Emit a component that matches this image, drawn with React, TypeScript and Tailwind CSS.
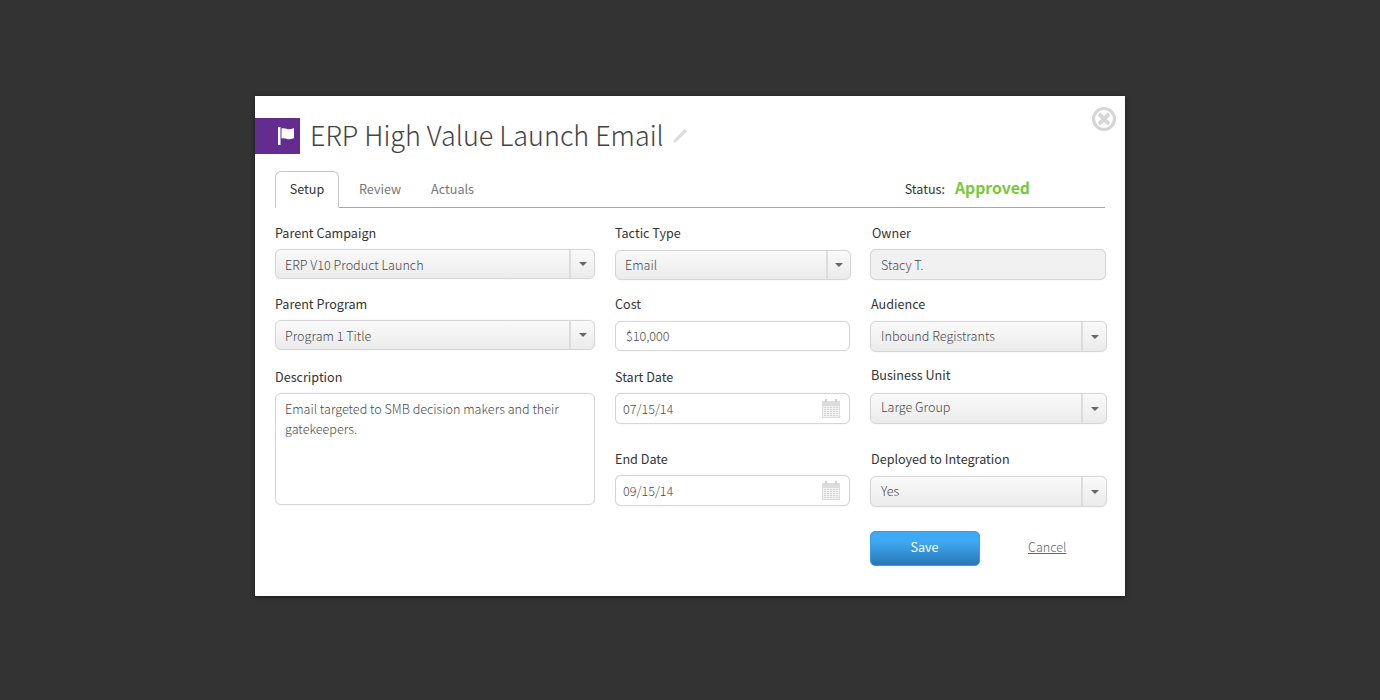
import React from "react";

const FONT = "font-['Noto_Sans_CJK_SC','Source_Sans_Pro','Lato',sans-serif]";

function Label({ children, className = "" }: { children: React.ReactNode; className?: string }) {
  return <div className={`h-5 text-[12.6px] leading-[19px] text-[#333] ${className}`}>{children}</div>;
}

function Select({ value, className = "", valueClass = "", arrowClass = "w-[25px]" }: { value: string; className?: string; valueClass?: string; arrowClass?: string }) {
  return (
    <div className={`flex items-stretch rounded-[6px] border border-[#d6d6d6] bg-gradient-to-b from-[#fafafa] to-[#ebebeb] shadow-[0_0_1px_rgba(0,0,0,0.2)] ${className}`}>
      <div className={`flex flex-1 items-center text-[12.6px] font-light text-[#4a4a4a] ${valueClass}`}>{value}</div>
      <div className={`flex items-center justify-center border-l-2 border-[#dcdcdc] ${arrowClass}`}>
        <div className="h-0 w-0 border-x-[4px] border-t-[4px] border-x-transparent border-t-[#666]" />
      </div>
    </div>
  );
}

function Calendar() {
  return (
    <svg width="18" height="19" viewBox="0 0 18 19" className="mr-[9px]">
      <rect x="0" y="2" width="18" height="17" fill="#dcdcdc" />
      <rect x="3" y="0" width="2" height="3" fill="#cfcfcf" />
      <rect x="13" y="0" width="2" height="3" fill="#cfcfcf" />
      <rect x="1" y="7" width="16" height="11" fill="#f2f2f2" />
      <g fill="#d4d4d4">
        {[8, 10, 12, 14, 16].map((y) =>
          [2, 5, 8, 11, 14].map((x) => <rect key={`${x}-${y}`} x={x} y={y} width="2" height="1" />)
        )}
      </g>
    </svg>
  );
}

function DateInput({ value, className = "" }: { value: string; className?: string }) {
  return (
    <div className={`flex items-center justify-between rounded-[6px] border border-[#d6d6d6] bg-white pl-[7px] text-[12.6px] font-light text-[#4a4a4a] shadow-[0_0_1px_rgba(0,0,0,0.2)] ${className}`}>
      <span className="pt-[2px]">{value}</span>
      <Calendar />
    </div>
  );
}

export default function App() {
  return (
    <div className={`flex h-[700px] w-[1380px] items-start justify-center bg-[#333333] pt-[96px] ${FONT}`}>
      <div className="relative h-[500px] w-[870px] bg-white shadow-[0_1px_4px_rgba(0,0,0,0.6)]">
        <button className="absolute right-[9px] top-[11px]" aria-label="Close">
          <svg width="24" height="24" viewBox="0 0 24 24" className="block">
            <circle cx="12" cy="12" r="10.500" fill="none" stroke="#d6d6d6" strokeWidth="3" />
            <path d="M8.200 8.200 15.800 15.800 M15.800 8.200 8.200 15.800" stroke="#d6d6d6" strokeWidth="4" strokeLinecap="round" />
          </svg>
        </button>

        <div className="flex items-center pt-[22px]">
          <div className="flex h-9 w-[45px] items-center justify-end bg-[#652c90] pr-[5px]">
            <svg width="17" height="18" viewBox="0 0 17 18">
              <rect x="0" y="0" width="2.500" height="18" fill="#fff" />
              <path d="M3.500 1.500c3.500-1.200 5.500 1 8 .8 2-.1 3-.8 4.500-1.300v10c-1.500.5-2.500 1.200-4.500 1.300-2.500.2-4.500-2-8-.8z" fill="#fff" />
            </svg>
          </div>
          <h1 className="ml-[10px] -translate-y-px text-[26.950px] font-light leading-9 text-[#444]">ERP High Value Launch Email</h1>
          <svg width="16" height="16" viewBox="0 0 16 16" className="ml-[8px]">
            <path d="M12.500 1 15 3.500 5 13.500 1 15 2.500 11z" fill="#dedede" />
          </svg>
        </div>

        <div className="mx-5 mt-[17px] flex h-[37px] items-stretch border-b border-[#a8a8a8] pr-[75px]">
          <div className="-mb-px flex w-[64px] items-center justify-center rounded-t-[6px] border border-b-white border-[#c4c4c4] bg-white text-[12.6px] text-[#333]">
            Setup
          </div>
          <div className="ml-5 flex items-center text-[12.6px] text-[#777]">Review</div>
          <div className="ml-[30px] flex items-center text-[12.6px] text-[#777]">Actuals</div>
          <div className="ml-auto flex items-center">
            <span className="text-[12.6px] text-[#333]">Status:</span>
            <span className="ml-[10px] -translate-y-px text-[15.750px] font-bold text-[#76c840]">Approved</span>
          </div>
        </div>

        <div className="mx-5 mt-[15px] flex items-start">
          <div className="w-[320px] shrink-0">
            <Label>Parent Campaign</Label>
            <Select value="ERP V10 Product Launch" className="mt-[6px] h-[30px]" valueClass="pl-[9px] pt-[2px]" />
            <Label className="mt-[15px]">Parent Program</Label>
            <Select value="Program 1 Title" className="mt-[6px] h-[30px]" valueClass="pl-[9px] pt-[2px]" />
            <Label className="mt-[17px]">Description</Label>
            <div className="mt-[6px] h-[112px] rounded-[6px] border border-[#d6d6d6] px-[9px] py-[5px] text-[12.6px] font-light leading-5 text-[#4a4a4a] shadow-[0_0_1px_rgba(0,0,0,0.2)]">
              Email targeted to SMB decision makers and their gatekeepers.
            </div>
          </div>

          <div className="ml-5 w-[235px] shrink-0">
            <Label>Tactic Type</Label>
            <Select value="Email" className="mt-[7px] h-[30px] w-[236px]" valueClass="pl-[9px]" arrowClass="w-[24px]" />
            <Label className="mt-[14px]">Cost</Label>
            <div className="mt-[7px] flex h-[30px] items-center rounded-[6px] border border-[#d6d6d6] pl-[10px] text-[12.6px] font-light text-[#4a4a4a] shadow-[0_0_1px_rgba(0,0,0,0.2)]">$10,000</div>
            <Label className="mt-4">Start Date</Label>
            <DateInput value="07/15/14" className="mt-[6px] h-[31px]" />
            <Label className="mt-[25px]">End Date</Label>
            <DateInput value="09/15/14" className="mt-[6px] h-[31px]" />
          </div>

          <div className="ml-5 w-[236px] shrink-0">
            <Label className="pl-[2px]">Owner</Label>
            <div className="mt-[6px] flex h-[31px] items-center rounded-[6px] border border-[#d6d6d6] bg-[#f1f1f1] pl-[10px] pt-[2px] text-[12.6px] font-light text-[#4a4a4a] shadow-[0_0_1px_rgba(0,0,0,0.2)]">Stacy T.</div>
            <Label className="mt-[14px] pl-px">Audience</Label>
            <Select value="Inbound Registrants" className="mt-[7px] h-[31px] w-[237px]" valueClass="pl-[10px]" />
            <Label className="mt-[13px] pl-px">Business Unit</Label>
            <Select value="Large Group" className="mt-2 h-[31px] w-[237px]" valueClass="pl-[10px] pb-[2px]" />
            <Label className="mt-[25px] pl-px">Deployed to Integration</Label>
            <Select value="Yes" className="mt-[7px] h-[31px] w-[237px]" valueClass="pl-[10px]" />
            <div className="mt-6 flex items-center">
              <button className="h-[35px] w-[110px] rounded-[5px] border border-[#3a9ce0] bg-gradient-to-b from-[#3ea8f4] from-30% to-[#2a77b4] pb-[2px] pr-px text-[12.6px] text-white">Save</button>
              <a className="ml-[48px] -translate-y-px text-[12.6px] font-light text-[#666] underline">Cancel</a>
            </div>
          </div>
        </div>
      </div>
    </div>
  );
}
